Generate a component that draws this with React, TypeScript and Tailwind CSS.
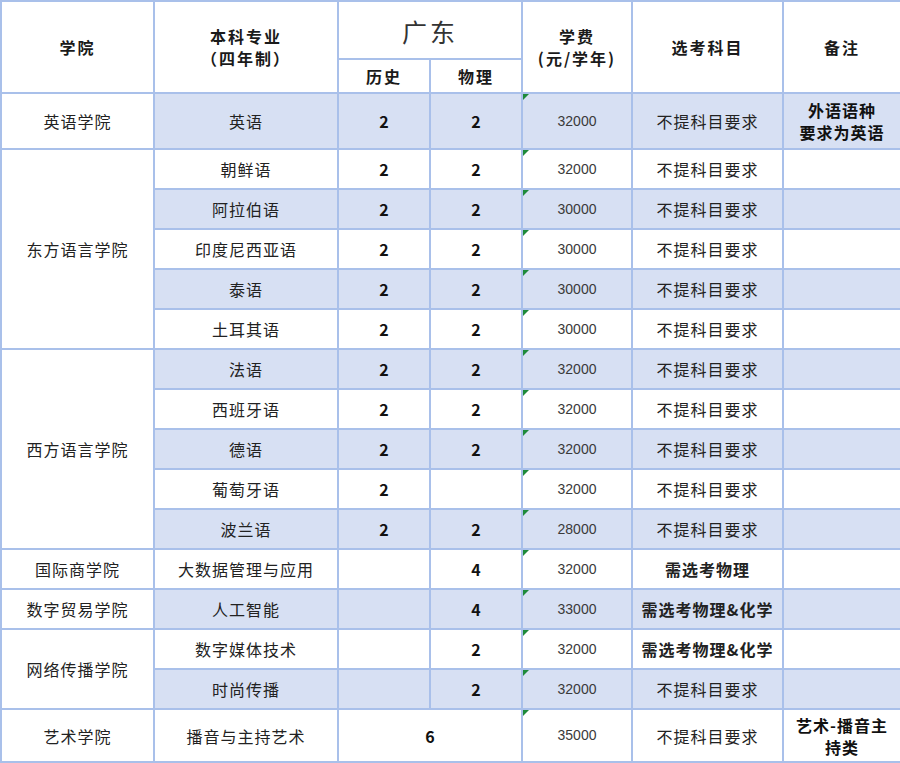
const font = { fontFamily: '"Noto Sans CJK SC", "Liberation Sans", sans-serif' };

type Row = {
  college?: string;
  span?: number;
  major: string;
  hist?: string;
  phys?: string;
  merged?: string;
  fee: string;
  subj: string;
  subjBold?: boolean;
  note?: string;
  h: number;
};

const rows: Row[] = [
  { college: '英语学院', span: 1, major: '英语', hist: '2', phys: '2', fee: '32000', subj: '不提科目要求', note: '外语语种\n要求为英语', h: 56 },
  { college: '东方语言学院', span: 5, major: '朝鲜语', hist: '2', phys: '2', fee: '32000', subj: '不提科目要求', h: 40 },
  { major: '阿拉伯语', hist: '2', phys: '2', fee: '30000', subj: '不提科目要求', h: 40 },
  { major: '印度尼西亚语', hist: '2', phys: '2', fee: '30000', subj: '不提科目要求', h: 40 },
  { major: '泰语', hist: '2', phys: '2', fee: '30000', subj: '不提科目要求', h: 40 },
  { major: '土耳其语', hist: '2', phys: '2', fee: '30000', subj: '不提科目要求', h: 40 },
  { college: '西方语言学院', span: 5, major: '法语', hist: '2', phys: '2', fee: '32000', subj: '不提科目要求', h: 40 },
  { major: '西班牙语', hist: '2', phys: '2', fee: '32000', subj: '不提科目要求', h: 40 },
  { major: '德语', hist: '2', phys: '2', fee: '32000', subj: '不提科目要求', h: 40 },
  { major: '葡萄牙语', hist: '2', phys: '', fee: '32000', subj: '不提科目要求', h: 40 },
  { major: '波兰语', hist: '2', phys: '2', fee: '28000', subj: '不提科目要求', h: 40 },
  { college: '国际商学院', span: 1, major: '大数据管理与应用', hist: '', phys: '4', fee: '32000', subj: '需选考物理', subjBold: true, h: 40 },
  { college: '数字贸易学院', span: 1, major: '人工智能', hist: '', phys: '4', fee: '33000', subj: '需选考物理&化学', subjBold: true, h: 40 },
  { college: '网络传播学院', span: 2, major: '数字媒体技术', hist: '', phys: '2', fee: '32000', subj: '需选考物理&化学', subjBold: true, h: 40 },
  { major: '时尚传播', hist: '', phys: '2', fee: '32000', subj: '不提科目要求', h: 40 },
  { college: '艺术学院', span: 1, major: '播音与主持艺术', merged: '6', fee: '35000', subj: '不提科目要求', note: '艺术-播音主\n持类', h: 53 },
];

const cell = 'border-2 border-[#a9c0ea] text-center align-middle p-0';
const head = `${cell} font-bold text-[16px] tracking-[2px] text-[#1a1a1a]`;

export default function App() {
  return (
    <div className="w-[900px] h-[763px] bg-white" style={font}>
      <table className="table-fixed border-collapse w-[900px]">
        <colgroup>
          <col className="w-[153px]" />
          <col className="w-[184px]" />
          <col className="w-[92px]" />
          <col className="w-[92px]" />
          <col className="w-[110px]" />
          <col className="w-[151px]" />
          <col className="w-[118px]" />
        </colgroup>
        <thead>
          <tr className="h-[58px]">
            <th rowSpan={2} className={head}>学院</th>
            <th rowSpan={2} className={`${head} leading-[22px]`}>
              本科专业
              <br />
              （四年制）
            </th>
            <th colSpan={2} className={`${cell} pt-[4px] text-[25px] font-normal tracking-[3px] text-[#333]`}>广东</th>
            <th rowSpan={2} className={`${head} leading-[22px] tracking-[1px]`}>
              学费
              <br />
              (元/学年)
            </th>
            <th rowSpan={2} className={head}>选考科目</th>
            <th rowSpan={2} className={head}>备注</th>
          </tr>
          <tr className="h-[34px]">
            <th className={head}>历史</th>
            <th className={head}>物理</th>
          </tr>
        </thead>
        <tbody>
          {rows.map((r, i) => {
            const shade = i % 2 === 0 ? 'bg-[#d7e0f3]' : 'bg-white';
            const body = `${cell} ${shade} text-[16px] tracking-[1px] text-[#222]`;
            const num = `${cell} ${shade} text-[16px] font-bold text-[#111]`;
            return (
              <tr key={i} style={{ height: r.h }}>
                {r.college && (
                  <td rowSpan={r.span} className={`${cell} bg-white text-[16px] tracking-[1px] text-[#222]`}>
                    {r.college}
                  </td>
                )}
                <td className={body}>{r.major}</td>
                {r.merged ? (
                  <td colSpan={2} className={num}>{r.merged}</td>
                ) : (
                  <>
                    <td className={num}>{r.hist}</td>
                    <td className={num}>{r.phys}</td>
                  </>
                )}
                <td
                  className={`${cell} ${shade} relative text-[14px] text-[#3a3a3a]`}
                  style={{ fontFamily: '"Liberation Sans", sans-serif' }}
                >
                  <span className="absolute left-0 top-0 w-0 h-0 border-t-[6px] border-r-[6px] border-t-[#1e8a3a] border-r-transparent" />
                  {r.fee}
                </td>
                <td className={`${body} ${r.subjBold ? 'font-bold text-[#111]' : ''}`}>{r.subj}</td>
                <td className={`${cell} ${shade} text-[16px] font-bold tracking-[1px] leading-[22px] text-[#111] whitespace-pre-line`}>
                  {r.note ?? ''}
                </td>
              </tr>
            );
          })}
        </tbody>
      </table>
    </div>
  );
}
